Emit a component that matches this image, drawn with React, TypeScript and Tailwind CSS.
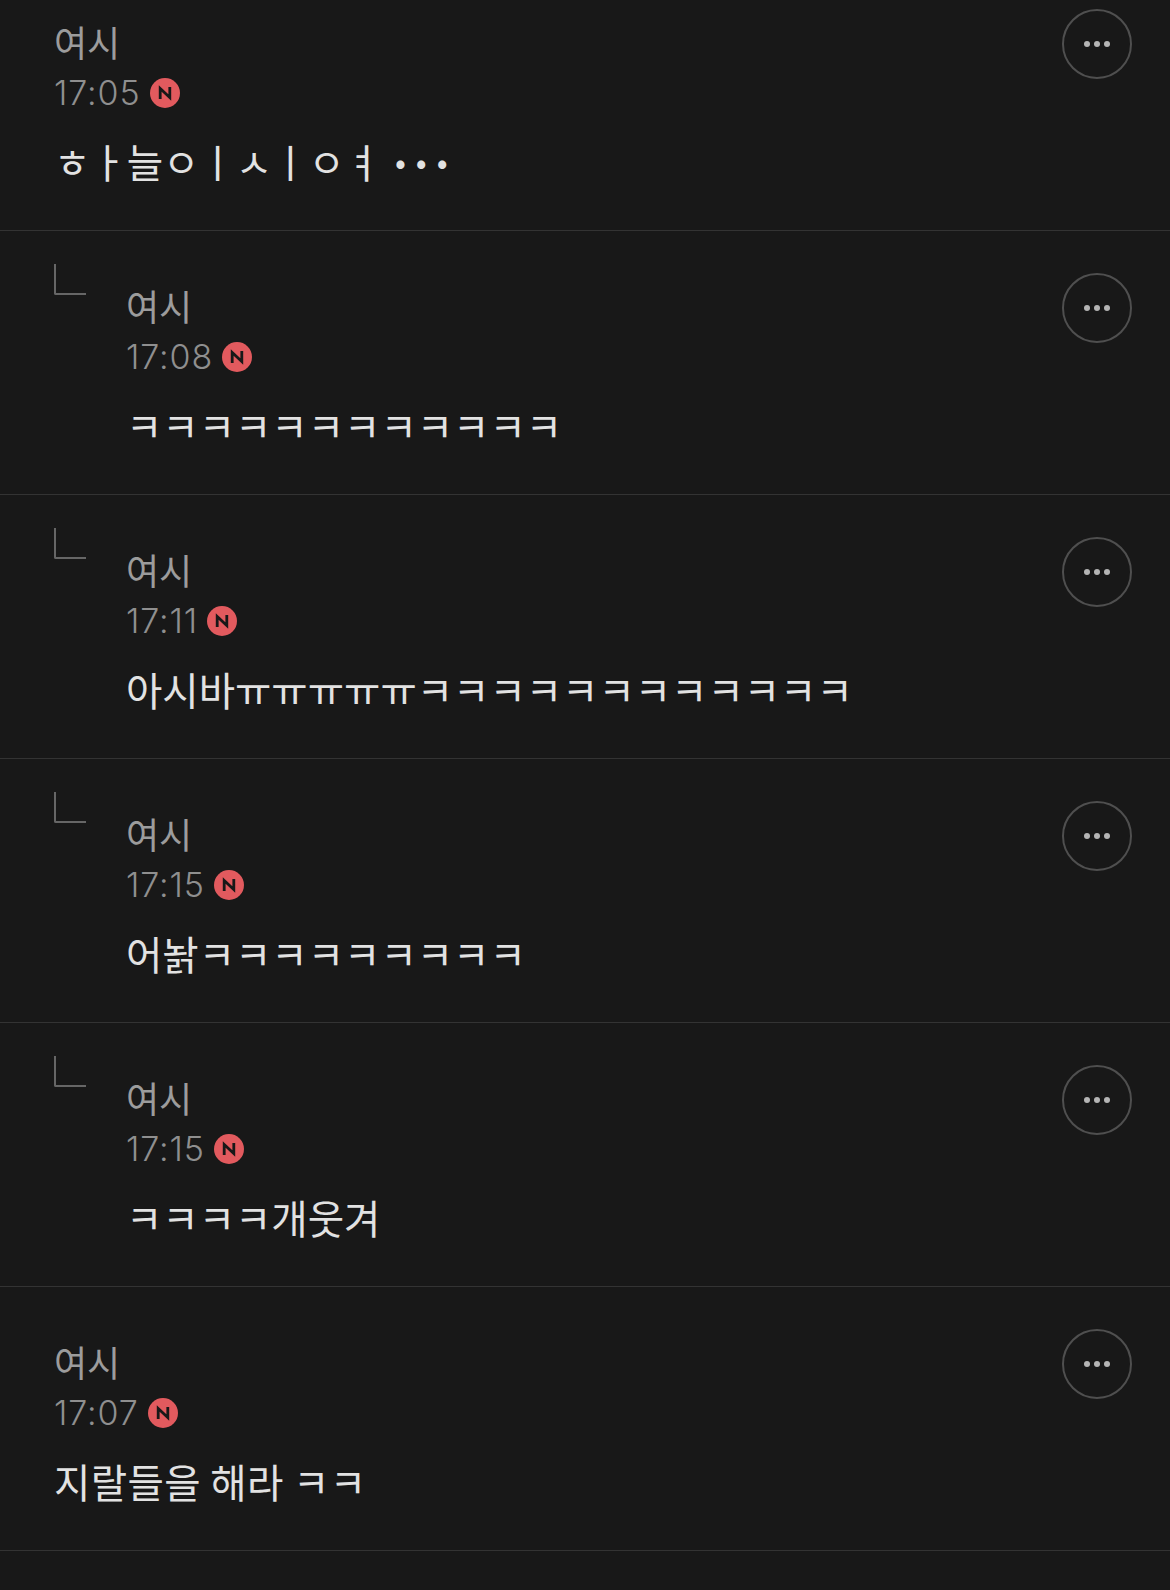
const comments = [
  { time: "17:05", text: "ㅎㅏ늘ㅇㅣㅅㅣㅇㅕ ", dots: true, reply: false, first: true },
  { time: "17:08", text: "ㅋㅋㅋㅋㅋㅋㅋㅋㅋㅋㅋㅋ", reply: true },
  { time: "17:11", text: "아시바ㅠㅠㅠㅠㅠㅋㅋㅋㅋㅋㅋㅋㅋㅋㅋㅋㅋ", reply: true },
  { time: "17:15", text: "어놝ㅋㅋㅋㅋㅋㅋㅋㅋㅋ", reply: true },
  { time: "17:15", text: "ㅋㅋㅋㅋ개웃겨", reply: true },
  { time: "17:07", text: "지랄들을 해라 ㅋㅋ", reply: false, wide: true },
];

type CommentProps = { time: string; text: string; reply: boolean; first?: boolean; dots?: boolean; wide?: boolean };

function Comment({ time, text, reply, first, dots, wide }: CommentProps) {
  return (
    <div className={`flex border-b border-[#333333] pl-[54px] pr-[38px] ${first ? "h-[231px] pt-[9px]" : "h-[264px] pt-[42px]"}`}>
      {reply && (
        <div className="mr-[40px] -mt-[9px] h-[31px] w-[32px] shrink-0 rounded-bl-[2px] border-b-2 border-l-2 border-[#666666]" />
      )}
      <div className="min-w-0 flex-1 pt-[7px]">
        <div className="h-[50px] text-[36px] font-normal leading-[50px] text-[#9c9c9c]">여시</div>
        <div className="mt-[4px] flex h-[46px] items-center">
          <span className="font-['Inter'] text-[34px] font-light leading-[46px] tracking-[0.9px] text-[#8f8f8f]">{time}</span>
          <span className="ml-[9px] flex h-[30px] w-[30px] items-center justify-center rounded-full bg-[#e25a5e]">
            <svg width="16" height="16" viewBox="0 0 16 16" fill="none" stroke="#181818" strokeWidth="2.8" strokeLinejoin="miter">
              <path d="M3.2 14V3.5L12.8 12.5V2" />
            </svg>
          </span>
        </div>
        <div className={`mt-[20px] whitespace-pre text-[39.5px] font-normal leading-[50px] text-[#e2e2e2] ${wide ? "tracking-[0.4px]" : ""}`}>
          {text}
          {dots && (
            <span className="ml-[5px] inline-block -translate-y-[4px] text-[32px] tracking-[10px]">•••</span>
          )}
        </div>
      </div>
      <button className="flex h-[70px] w-[70px] shrink-0 items-center justify-center gap-[4px] rounded-full border-2 border-[#4f4f4f]">
        <span className="h-[6px] w-[6px] rounded-full bg-[#b5b5b5]" />
        <span className="h-[6px] w-[6px] rounded-full bg-[#b5b5b5]" />
        <span className="h-[6px] w-[6px] rounded-full bg-[#b5b5b5]" />
      </button>
    </div>
  );
}

export default function App() {
  return (
    <div className="h-[1590px] overflow-hidden bg-[#181818] font-['Noto_Sans_CJK_KR','Noto_Sans',sans-serif]">
      {comments.map((c, i) => (
        <Comment key={i} {...c} />
      ))}
    </div>
  );
}
